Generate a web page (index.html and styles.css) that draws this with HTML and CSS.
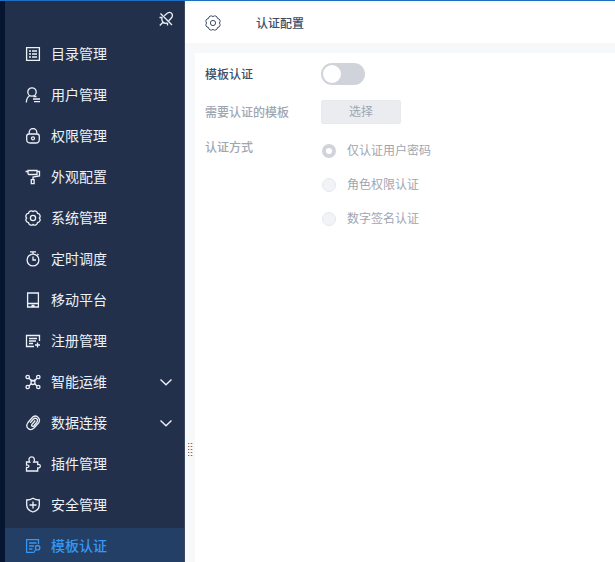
FILE: index.html
```html
<!DOCTYPE html>
<html lang="zh-CN">
<head>
<meta charset="utf-8">
<title>认证配置</title>
<link rel="stylesheet" href="styles.css">
</head>
<body>
<div class="app">
  <nav class="sidebar">
    <div class="pin-row">
      <svg class="icon" viewBox="0 0 16 16"><path d="M2.500 2.500l11.500 11.500M6.300 4.800L9.500 2q3-1.500 4.500.800 1 2-.500 4L10.800 9.800M1.500 6.500h3M4.200 6.500q-1 2.500.700 4.500t4.700.900M9.500 12v2.500M5 11.300L1.800 14.500"/></svg>
    </div>
    <ul class="menu">
      <li class="item"><svg class="icon" viewBox="0 0 16 16"><path d="M1.600 1.600h12.800v12.800H1.600zM4 5h2M7 5h5M4 8h2M7 8h5M4 11h2M7 11h5"/></svg><span>目录管理</span></li>
      <li class="item"><svg class="icon" viewBox="0 0 16 16"><circle cx="7" cy="5" r="4.200"/><path d="M5 8.500C2.500 9.700 1.500 12 1.300 15.500M8.500 9.500h3M8 12h7M9 14.700h6"/></svg><span>用户管理</span></li>
      <li class="item"><svg class="icon" viewBox="0 0 16 16"><path d="M4.200 6V4.300a3.800 3.800 0 0 1 7.600 0V6M4 6h8q2.300 0 2.300 2.300v3.200q0 3.500-3.500 3.500H5.200q-3.500 0-3.500-3.500V8.300Q1.700 6 4 6z"/><circle cx="8" cy="10.300" r="1.500"/></svg><span>权限管理</span></li>
      <li class="item"><svg class="icon" viewBox="0 0 16 16"><path d="M3 1.500h9v4H4Q3 5.500 3 4.300zM.500 2.500H3M12 2.500h2.500V7L8 8v2.500M6.300 10.700h2.800v4H6.300z"/></svg><span>外观配置</span></li>
      <li class="item"><svg class="icon" viewBox="0 0 16 16"><path d="M8 1.600A2.700 2.700 0 0 1 12.530 3.470A2.700 2.700 0 0 1 14.400 8A2.700 2.700 0 0 1 12.530 12.530A2.700 2.700 0 0 1 8 14.400A2.700 2.700 0 0 1 3.470 12.530A2.700 2.700 0 0 1 1.600 8A2.700 2.700 0 0 1 3.470 3.470A2.700 2.700 0 0 1 8 1.600z"/><circle cx="8" cy="8" r="2.600"/></svg><span>系统管理</span></li>
      <li class="item"><svg class="icon" viewBox="0 0 16 16"><circle cx="8" cy="9" r="5.900"/><path d="M5 .900h6M8 1v2M8 5.500V9h3M12.300 3l1.200 1"/></svg><span>定时调度</span></li>
      <li class="item"><svg class="icon" viewBox="0 0 16 16"><path d="M2.600 1h10.800v14H2.600zM2.600 11.500h10.800M6.500 13.500h3"/></svg><span>移动平台</span></li>
      <li class="item"><svg class="icon" viewBox="0 0 16 16"><path d="M14.500 8V2.500h-13v11H9M4 5.500h8M4 8h7M4 10.500h4M12.500 9.500v5M10 12h5"/></svg><span>注册管理</span></li>
      <li class="item"><svg class="icon" viewBox="0 0 16 16"><circle cx="2.700" cy="3" r="1.700"/><circle cx="13.300" cy="3" r="1.700"/><circle cx="2.700" cy="13" r="1.700"/><circle cx="13.300" cy="13" r="1.700"/><circle cx="8" cy="8.500" r="2"/><path d="M4 4.200l2.500 3M12 4.200l-2.500 3M4 12l2.500-2.500M12 12L9.500 9.500M4 4.500l4 2.500 4-2.500"/></svg><span>智能运维</span><svg class="icon arrow" viewBox="0 0 16 16"><path d="M2.500 5.500L8 10.700l5.500-5.200"/></svg></li>
      <li class="item"><svg class="icon" viewBox="0 0 16 16"><path d="M10.300 5.500L7 9.400C6 11 7.700 12 8.900 10.700L11.600 7.500C14 4.500 10.700 1.800 8 4.500L5.200 7.800M8 1.800L3 7.500C-.500 12.500 5 17 9.200 12.800L13.500 8C16.300 4.300 12-.700 8 1.800"/></svg><span>数据连接</span><svg class="icon arrow" viewBox="0 0 16 16"><path d="M2.500 5.500L8 10.700l5.500-5.200"/></svg></li>
      <li class="item"><svg class="icon" viewBox="0 0 16 16"><path d="M1.500 6h3.200C3 3.500 4.200.900 6.700.900S10.300 3.500 8.700 6h4v2.500c3.500-.700 3.500 4 0 3.500v3h-11.200V11.500c3.200.400 3.200-2.900 0-2.500z"/></svg><span>插件管理</span></li>
      <li class="item"><svg class="icon" viewBox="0 0 16 16"><path d="M8 1.200Q11 3 14.300 3v5c0 3.500-2.500 5.800-6.300 7C4.200 13.800 1.700 11.500 1.700 8V3Q5 3 8 1.200zM8 4.500v7M4.500 8h7"/></svg><span>安全管理</span></li>
      <li class="item active"><svg class="icon" viewBox="0 0 16 16"><path d="M13.500 6V1.600H1.600v12.800H8M4 5h7.500M4 8h5M4 11h3.500M10.700 11.500L8.500 15"/><circle cx="12.600" cy="9.700" r="2.200"/></svg><span>模板认证</span></li>
    </ul>
  </nav>
  <div class="content">
    <header class="header">
      <svg class="icon" viewBox="0 0 16 16"><path d="M8 1.600A2.700 2.700 0 0 1 12.530 3.470A2.700 2.700 0 0 1 14.400 8A2.700 2.700 0 0 1 12.530 12.530A2.700 2.700 0 0 1 8 14.400A2.700 2.700 0 0 1 3.470 12.530A2.700 2.700 0 0 1 1.600 8A2.700 2.700 0 0 1 3.470 3.470A2.700 2.700 0 0 1 8 1.600z"/><circle cx="8" cy="8" r="2.600"/></svg>
      <h1>认证配置</h1>
    </header>
    <div class="body">
      <div class="splitter"><svg width="5" height="13" viewBox="0 0 5 13"><path d="M.500 0v13M3.500 0v13"/></svg></div>
      <main class="panel">
        <div class="row first"><div class="label">模板认证</div><div class="switch"></div></div>
        <div class="row second muted"><div class="label">需要认证的模板</div><button class="choose" disabled>选择</button></div>
        <div class="row third muted">
          <div class="label">认证方式</div>
          <div class="radios">
            <div class="radio checked"><i></i><span>仅认证用户密码</span></div>
            <div class="radio"><i></i><span>角色权限认证</span></div>
            <div class="radio"><i></i><span>数字签名认证</span></div>
          </div>
        </div>
      </main>
    </div>
  </div>
</div>
</body>
</html>
```
FILE: styles.css
```css
* { box-sizing: border-box; }
body {
  margin: 0;
  font: 12px/18px "Noto Sans CJK SC", sans-serif;
  color: #3d4d66;
}
.app {
  display: flex;
  height: 562px;
  overflow: hidden;
  border-top: 1px solid #1d6fc4;
}
.icon {
  width: 16px;
  height: 16px;
  flex: none;
  fill: none;
  stroke: currentColor;
  stroke-width: 1.3;
}
.sidebar {
  flex: none;
  width: 185px;
  border-left: 5px solid #061530;
  border-right: 1px solid #3a4861;
  background: #22304c;
  color: #edf2f8;
}
.pin-row {
  display: flex;
  justify-content: flex-end;
  height: 35px;
  padding: 10px 10px 0 0;
}
.menu {
  display: flex;
  flex-direction: column;
  gap: 5px;
  margin: 0;
  padding: 0;
  list-style: none;
}
.item {
  display: flex;
  align-items: center;
  gap: 10px;
  height: 36px;
  padding: 0 10px 0 20px;
  font-size: 14px;
}
.item span { padding-bottom: 2px; }
.item .arrow { margin-left: auto; stroke-width: 1.4; }
.item.active { background: #243f65; color: #3597f5; }
.item.active span { font-weight: 500; }
.content {
  flex: 1;
  display: flex;
  flex-direction: column;
  background: #f6f8fa;
}
.header {
  display: flex;
  align-items: center;
  height: 42px;
  padding: 3px 0 0 20px;
  background: linear-gradient(#f7f8fa, #fff 5px);
}
.header .icon { stroke-width: 1; margin-top: -1px; }
.header h1 {
  margin: 0 0 1px 35px;
  font-size: 12px;
  font-weight: 500;
}
.body {
  flex: 1;
  display: flex;
  padding-top: 10px;
}
.splitter {
  width: 10px;
  padding: 390px 0 0 3px;
}
.splitter svg {
  display: block;
  fill: none;
  stroke: #a06850;
  stroke-width: 1.6;
  stroke-dasharray: 1 2;
}
.panel {
  flex: 1;
  padding: 10px 0 0 10px;
  background: #fff;
}
.row { display: flex; }
.label { width: 116px; font-weight: 500; }
.first { height: 37px; }
.first .label { padding-top: 2px; }
.second { height: 38px; }
.second .label { padding-top: 3px; }
.third .label { padding-top: 0; }
.muted { color: #9ea6b2; }
.switch {
  width: 44px;
  height: 22px;
  padding: 2px;
  border-radius: 11px;
  background: #d0d4da;
}
.switch::before {
  content: "";
  display: block;
  width: 18px;
  height: 18px;
  border-radius: 50%;
  background: #fff;
}
.choose {
  width: 80px;
  height: 24px;
  padding: 0 0 2px;
  border: 1px solid #e7e9ed;
  border-radius: 2px;
  background: #ebecf0;
  color: #9ea6b2;
  font: inherit;
  line-height: 20px;
}
.radios {
  display: flex;
  flex-direction: column;
  gap: 16px;
  padding: 4px 0 0 1px;
}
.radio {
  display: flex;
  align-items: center;
  gap: 11px;
  height: 18px;
}
.radio span { padding-bottom: 2px; }
.radio i {
  width: 14px;
  height: 14px;
  border: 1px solid #e5e8ed;
  border-radius: 50%;
  background: #f1f3f7;
}
.radio.checked i {
  border: 4px solid #d0d4da;
  background: #fff;
}
```
